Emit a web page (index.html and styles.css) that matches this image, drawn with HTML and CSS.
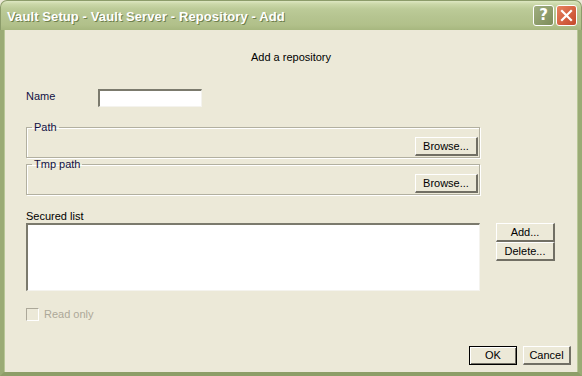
FILE: index.html
```html
<!DOCTYPE html>
<html>
<head>
<meta charset="utf-8">
<link rel="stylesheet" href="styles.css">
</head>
<body>
<div class="window">
  <div class="titlebar">
    <span class="title">Vault Setup - Vault Server - Repository - Add</span>
    <div class="tb-buttons">
      <span class="tb help">?</span>
      <span class="tb close"><svg width="13" height="13" viewBox="0 0 13 13"><path d="M2 2 L11 11 M11 2 L2 11" stroke="#fff" stroke-width="2.2" stroke-linecap="square"/></svg></span>
    </div>
  </div>
  <div class="client">
    <div class="heading">Add a repository</div>
    <div class="name-row">
      <span class="label">Name</span>
      <div class="textbox"></div>
    </div>
    <fieldset class="group first">
      <legend>Path</legend>
      <button class="btn browse">Browse...</button>
    </fieldset>
    <fieldset class="group">
      <legend>Tmp path</legend>
      <button class="btn browse">Browse...</button>
    </fieldset>
    <div class="list-label">Secured list</div>
    <div class="list-row">
      <div class="listbox"></div>
      <div class="list-buttons">
        <button class="btn small">Add...</button>
        <button class="btn small">Delete...</button>
      </div>
    </div>
    <div class="check-row">
      <span class="checkbox"></span>
      <span class="check-label">Read only</span>
    </div>
    <div class="footer">
      <button class="btn dlg default">OK</button>
      <button class="btn dlg">Cancel</button>
    </div>
  </div>
</div>
</body>
</html>
```

FILE: styles.css
```css
html, body {
  margin: 0;
  padding: 0;
  background: #ece9d8;
}
.window {
  width: 582px;
  height: 376px;
  display: flex;
  flex-direction: column;
  font-family: "Liberation Sans", Arial, sans-serif;
  font-size: 11px;
  color: #000;
}
.titlebar {
  height: 30px;
  box-sizing: border-box;
  border-radius: 7px 7px 0 0;
  border: 1px solid #8c9c6a;
  border-bottom: none;
  background: linear-gradient(#dde7c2 0px, #cbd8a9 3px, #bccb98 8px, #b6c591 15px, #b1c08a 24px, #a7b77f 29px);
  display: flex;
  align-items: flex-start;
  padding: 0 4px 0 6px;
}
.title {
  margin-top: 8px;
  font-weight: bold;
  font-size: 13px;
  line-height: 15px;
  color: #fff;
  text-shadow: 1px 1px 0 #6e7f4c;
  letter-spacing: 0.1px;
}
.tb-buttons {
  margin-left: auto;
  margin-top: 4px;
  display: flex;
  gap: 2px;
}
.tb {
  width: 21px;
  height: 21px;
  box-sizing: border-box;
  border: 1px solid #fff;
  border-radius: 3px;
  display: flex;
  align-items: center;
  justify-content: center;
}
.help {
  background: linear-gradient(135deg, #a0ae80, #7e8d5a);
  color: #fff;
  font-family: "DejaVu Sans", sans-serif;
  font-weight: bold;
  font-size: 15px;
  line-height: 15px;
}
.close {
  background: linear-gradient(135deg, #e7825f, #c5482a);
}
.client {
  flex: 1;
  display: flex;
  flex-direction: column;
  border-left: 4px solid #9aab75;
  border-right: 4px solid #9aab75;
  border-bottom: 4px solid #8d9e68;
  box-shadow: inset 1px 0 0 #b8c797, inset -1px 0 0 #b8c797;
  padding: 0 7px 0 22px;
  background: #ece9d8;
}
.heading {
  margin-top: 21px;
  margin-left: -22px;
  margin-right: -7px;
  text-align: center;
  line-height: 13px;
}
.name-row {
  margin-top: 25px;
  display: flex;
  align-items: flex-start;
  height: 18px;
}
.label {
  width: 72px;
  line-height: 13px;
  padding-top: 1px;
  color: #111144;
}
.textbox {
  width: 104px;
  height: 18px;
  box-sizing: border-box;
  background: #fff;
  border-style: solid;
  border-width: 2px 1px 1px 2px;
  border-color: #7b7a6d #f4f3ee #f4f3ee #7b7a6d;
}
.group {
  margin: 0;
  width: 454px;
  box-sizing: border-box;
  height: 37px;
  border: 1px solid #b2b0a0;
  box-shadow: inset 1px 1px 0 #fff, 1px 1px 0 #fff;
  padding: 4px 1px 1px 0;
  display: flex;
  justify-content: flex-end;
  align-items: flex-start;
}
.group.first {
  margin-top: 14px;
}
.group legend {
  padding: 0 2px;
  margin-left: 5px;
  line-height: 12px;
  font-size: 11px;
  color: #111144;
}
.btn {
  font-family: "Liberation Sans", Arial, sans-serif;
  font-size: 11px;
  color: #000;
  background: #ece9d8;
  box-sizing: border-box;
  border-style: solid;
  border-width: 1px 2px 2px 1px;
  border-color: #fff #716f64 #716f64 #fff;
  padding: 0;
  margin: 0;
  line-height: 13px;
}
.browse {
  width: 63px;
  height: 19px;
}
.list-label {
  margin-top: 15px;
  line-height: 13px;
}
.list-row {
  display: flex;
  align-items: flex-start;
}
.listbox {
  width: 454px;
  height: 68px;
  box-sizing: border-box;
  background: #fff;
  border-style: solid;
  border-width: 2px 1px 1px 2px;
  border-color: #7b7a6d #f4f3ee #f4f3ee #7b7a6d;
}
.list-buttons {
  margin-left: 16px;
  display: flex;
  flex-direction: column;
}
.small {
  width: 59px;
  height: 19px;
}
.check-row {
  margin-top: 17px;
  display: flex;
  align-items: center;
  height: 13px;
}
.checkbox {
  width: 13px;
  height: 13px;
  box-sizing: border-box;
  border-style: solid;
  border-width: 1px;
  border-color: #aca899 #fff #fff #aca899;
  background: #ece9d8;
}
.check-label {
  margin-left: 5px;
  color: #aca899;
  line-height: 13px;
}
.footer {
  margin-top: 25px;
  display: flex;
  justify-content: flex-end;
  gap: 6px;
}
.dlg {
  width: 48px;
  height: 19px;
}
.default {
  border: 1px solid #000;
  box-shadow: inset 1px 1px 0 #fff, inset -1px -1px 0 #716f64;
}
```
